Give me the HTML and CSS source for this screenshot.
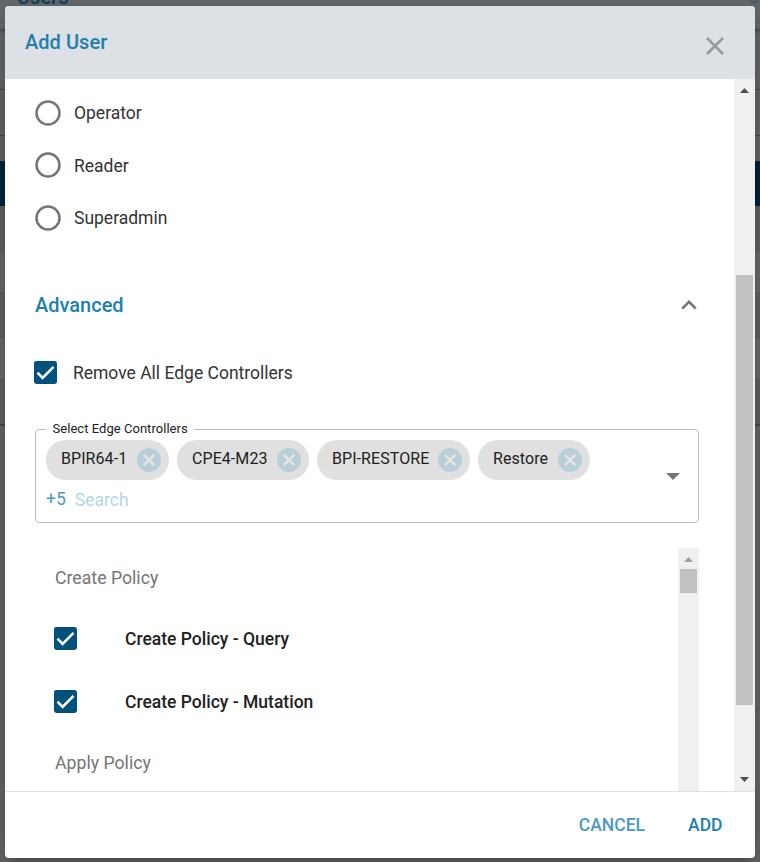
FILE: index.html
```html
<!DOCTYPE html>
<html lang="en">
<head>
<meta charset="utf-8">
<title>Users</title>
<link rel="stylesheet" href="styles.css">
</head>
<body>
<svg class="defs" aria-hidden="true">
  <symbol id="check" viewBox="0 0 24 24"><rect width="24" height="24" rx="2.6" fill="#00527d"/><path d="M3.6 12.2l5.4 5.4L20.4 6.2" fill="none" stroke="#fff" stroke-width="2.7"/></symbol>
  <symbol id="remove" viewBox="0 0 24 24"><circle cx="12" cy="12" r="12" fill="#b8cfd9"/><path d="M6.8 6.8l10.4 10.4M17.2 6.8L6.8 17.2" stroke="#e6e6e6" stroke-width="2.4"/></symbol>
  <symbol id="radio" viewBox="0 0 26 26"><circle cx="13" cy="13" r="11.5" fill="none" stroke="#757575" stroke-width="2.5"/></symbol>
</svg>
<div class="page">
  <header class="page-head"><h1>Users</h1><span>Se</span></header>
  <div class="table">
    <div class="row first"></div><div class="row second"></div><div class="row gap"></div><div class="row navy"></div>
    <div class="row odd"></div><div class="row even"></div><div class="row odd"></div><div class="row even"></div><div class="row odd last"></div>
  </div>
</div>
<section class="dialog" role="dialog" aria-label="Add User">
  <header class="head">
    <h2>Add User</h2>
    <svg class="close" viewBox="0 0 18 18"><path d="M1 1l16 16M17 1L1 17"/></svg>
  </header>
  <div class="body">
    <div class="content">
      <div class="radios">
        <label class="radio"><svg><use href="#radio"/></svg><span>Operator</span></label>
        <label class="radio"><svg><use href="#radio"/></svg><span class="reader">Reader</span></label>
        <label class="radio"><svg><use href="#radio"/></svg><span>Superadmin</span></label>
      </div>
      <div class="advanced"><h3>Advanced</h3><svg viewBox="0 0 16 10"><path d="M1.2 8.6L8 1.8l6.8 6.8"/></svg></div>
      <label class="remove-all"><svg><use href="#check"/></svg><span>Remove All Edge Controllers</span></label>
      <fieldset class="select">
        <legend>Select Edge Controllers</legend>
        <div class="values">
          <div class="chips">
            <span class="chip c1"><b>BPIR64-1</b><svg><use href="#remove"/></svg></span>
            <span class="chip c2"><b>CPE4-M23</b><svg><use href="#remove"/></svg></span>
            <span class="chip c3"><b>BPI-RESTORE</b><svg><use href="#remove"/></svg></span>
            <span class="chip c4"><b>Restore</b><svg><use href="#remove"/></svg></span>
          </div>
          <div class="search"><span class="more">+5</span><span class="placeholder">Search</span></div>
        </div>
        <svg class="caret" viewBox="0 0 14 7"><path d="M0 0h14L7 7z"/></svg>
      </fieldset>
      <div class="policies">
        <div class="list">
          <h4>Create Policy</h4>
          <label class="policy"><svg><use href="#check"/></svg><span>Create Policy - Query</span></label>
          <label class="policy"><svg><use href="#check"/></svg><span>Create Policy - Mutation</span></label>
          <h4 class="apply">Apply Policy</h4>
        </div>
        <div class="bar inner"><svg class="arrow" viewBox="0 0 9 5"><path d="M0 5L4.5 0 9 5z"/></svg><div class="thumb"></div></div>
      </div>
    </div>
    <div class="bar outer"><svg class="arrow" viewBox="0 0 9 5"><path d="M0 5L4.5 0 9 5z"/></svg><div class="thumb"></div><svg class="arrow down" viewBox="0 0 9 5"><path d="M0 0h9L4.5 5z"/></svg></div>
  </div>
  <footer class="foot"><span class="cancel">CANCEL</span><span class="add">ADD</span></footer>
</section>
</body>
</html>
```
FILE: styles.css
```css
* { box-sizing: border-box; }
body { margin: 0; width: 760px; height: 862px; overflow: hidden; background: #666; font-family: Roboto, "Liberation Sans", sans-serif; color: #212121; }
h1, h2, h3, h4 { margin: 0; font-weight: 500; white-space: nowrap; }
span, b { white-space: nowrap; }
svg { display: block; flex: none; }
.defs { position: absolute; width: 0; height: 0; }
.page { height: 862px; }
.page-head { height: 29px; padding: 0 0 0 17px; display: flex; justify-content: space-between; background: #64696c; box-shadow: 0 1px 4px #333; overflow: hidden; color: #123f56; }
.page-head h1 { font-size: 20px; line-height: 24px; margin-top: -15px; }
.page-head span { font-size: 18px; line-height: 24px; margin: -15px -8px 0 0; color: #3c5d6c; }
.row { height: 45px; border-bottom: 1px solid #5b5b5b; }
.row.first { height: 61px; border-color: #484848; }
.row.second { height: 46px; border-color: #484848; }
.row.gap { height: 25px; border: 0; }
.row.navy { background: #00253a; border: 0; }
.row.odd { background: #616161; }
.row.even { height: 42px; background: #6a6a6a; }
.row.last { border: 2px solid #484848; border-width: 0 0 2px; height: 46px; }

.dialog { position: absolute; left: 5px; top: 6px; width: 750px; height: 852px; background: #fff; border-radius: 4px; overflow: hidden; display: flex; flex-direction: column; box-shadow: 0 11px 15px -7px rgba(0,0,0,.2), 0 9px 30px 4px rgba(0,0,0,.16); }
.head { height: 73px; flex: none; background: #dce1e5; padding: 0 31px 0 20px; display: flex; justify-content: space-between; }
.head h2 { font-size: 20px; line-height: 24px; margin-top: 24px; letter-spacing: .04px; color: #1e7fae; }
.close { width: 18px; height: 18px; margin-top: 31px; fill: none; stroke: #999; stroke-width: 2.6; }
.body { height: 712px; flex: none; display: flex; overflow: hidden; }
.content { width: 729px; padding: 0 35px 0 30px; }
.radios { padding-top: 21px; height: 196px; }
.radio { display: flex; align-items: center; height: 26px; margin-bottom: 26.4px; }
.radio svg { width: 26px; height: 26px; margin-right: 13px; }
.radio span, .remove-all span { font-size: 17.5px; font-weight: 400; line-height: 24px; color: #333; }
.radio .reader { padding-top: 1px; }
.advanced { display: flex; justify-content: space-between; align-items: center; height: 60px; padding-right: 2px; }
.advanced h3 { font-size: 20px; line-height: 24px; color: #1e7fae; }
.advanced svg { width: 16px; height: 10px; fill: none; stroke: #757575; stroke-width: 2.6; }
.remove-all { display: flex; align-items: center; height: 24px; margin-top: 25px; }
.remove-all span { margin-top: 2px; }
.remove-all svg, .policy svg { width: 23px; height: 23px; margin: 0 15.5px 0 -.6px; }
.select { margin: 37px 0 0; height: 102px; padding: 0 18px 0 10px; border: 1px solid #bdbdbd; border-radius: 4px; display: flex; justify-content: space-between; min-width: 0; }
.select legend { font-size: 13px; line-height: 16px; letter-spacing: .04px; padding: 0 6px 0 6.5px; margin-left: 0; }
.chips { display: flex; gap: 8px; margin-top: 3px; }
.chip { height: 40px; border-radius: 20px; background: #e0e0e0; display: flex; align-items: center; justify-content: space-between; padding: 0 8px 0 15px; }
.chip b { font-size: 16px; font-weight: 400; line-height: 20px; margin-top: -3px; letter-spacing: .07px; }
.chip svg { width: 24px; height: 24px; }
.c1 { width: 123px; } .c2 { width: 132px; } .c3 { width: 153.4px; } .c4 { width: 112px; margin-left: -.4px; }
.search { display: flex; gap: 9px; margin-top: 7px; line-height: 24px; font-size: 17.5px; }
.more { color: #4a9abf; }
.placeholder { color: #b5d6e6; margin-top: 1px; }
.caret { width: 14px; height: 7px; fill: #757575; margin-top: 36px; }
.policies { display: flex; justify-content: space-between; margin-top: 25px; height: 244px; }
.list { padding: 18px 0 0 20px; }
.list h4 { font-size: 17.7px; line-height: 24px; color: #757575; font-weight: 400; }
.policy { display: flex; align-items: center; height: 24px; margin-top: 37px; font-size: 17.5px; font-weight: 500; }
.policy + .policy { margin-top: 39px; }
.policy svg { margin: -1px 47.6px 0 -.6px; }
.list .apply { margin-top: 37px; }
.bar { background: #f0f0f0; width: 21px; display: flex; flex-direction: column; align-items: center; }
.arrow { width: 9px; height: 5px; fill: #4f4f4f; }
.inner .arrow { fill: #a0a0a0; margin-top: 9px; }
.thumb { width: 17px; background: #c1c1c1; }
.inner .thumb { height: 24px; margin-top: 7px; }
.outer { height: 712px; }
.outer .arrow { margin-top: 9px; }
.outer .thumb { height: 430px; margin-top: 182px; }
.outer .down { margin-top: 72px; }
.foot { height: 67px; flex: none; border-top: 1px solid #e0e0e0; display: flex; justify-content: flex-end; gap: 43px; padding: 21px 32.5px 0 0; font-size: 17.5px; font-weight: 500; line-height: 24px; color: #1e7fae; }
.cancel { color: #4a9abf; }
```
